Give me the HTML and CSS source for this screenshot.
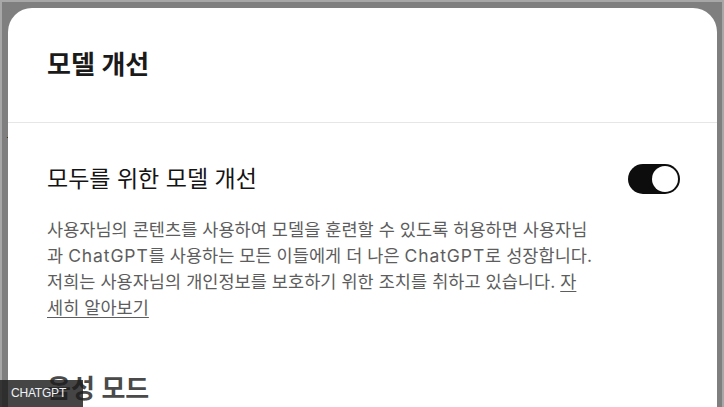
FILE: index.html
```html
<!DOCTYPE html>
<html lang="ko">
<head>
<meta charset="utf-8">
<title>모델 개선</title>
<link rel="stylesheet" href="styles.css">
</head>
<body>
<div class="backdrop">
  <span class="behind">ㅓ</span>
  <div class="modal">
    <header class="modal-header">
      <h1 class="modal-title">모델 개선</h1>
    </header>
    <div class="modal-body">
      <div class="setting-row">
        <span class="setting-label">모두를 위한 모델 개선</span>
        <span class="toggle" role="switch" aria-checked="true"><span class="knob"></span></span>
      </div>
      <p class="setting-desc">사용자님의 콘텐츠를 사용하여 모델을 훈련할 수 있도록 허용하면 사용자님<br>과 <span class="brand">ChatGPT</span>를 사용하는 모든 이들에게 더 나은 <span class="brand">ChatGPT</span>로 성장합니다.<br>저희는 사용자님의 개인정보를 보호하기 위한 조치를 취하고 있습니다. <a class="learn" href="#">자<br>세히 알아보기</a></p>
      <h2 class="section-title">음성 모드</h2>
    </div>
  </div>
</div>
<div class="source-tag">CHATGPT</div>
</body>
</html>
```
FILE: styles.css
```css
html, body {
  margin: 0;
  padding: 0;
}
body {
  width: 724px;
  height: 407px;
  overflow: hidden;
  background: #a7a7a7;
  font-family: Inter, "Noto Sans CJK KR", "Noto Sans", sans-serif;
  position: relative;
}
.backdrop {
  position: relative;
  margin: 2px 2px 0 2px;
  height: 405px;
  box-sizing: border-box;
  background: #7f7f7f;
  padding: 6px 5px 0 6px;
}
.behind {
  position: absolute;
  left: 1px;
  top: 126px;
  font-size: 14px;
  color: #1a1a1a;
  line-height: 20px;
}
.modal {
  position: relative;
  height: 100%;
  background: #ffffff;
  border-radius: 24px 24px 0 0;
  overflow: hidden;
}
.modal-header {
  height: 115px;
  box-sizing: border-box;
  display: flex;
  align-items: center;
  padding: 0 40px 0 39px;
  border-bottom: 1px solid #e6e6e6;
}
.modal-title {
  margin: 0;
  font-size: 26px;
  font-weight: 600;
  color: #1a1a1a;
  line-height: 34px;
}
.modal-body {
  padding: 41px 37px 0 39px;
}
.setting-row {
  display: flex;
  align-items: center;
  justify-content: space-between;
  height: 30px;
}
.setting-label {
  font-size: 23px;
  color: #141414;
  line-height: 30px;
  font-weight: 400;
}
.toggle {
  width: 52px;
  height: 30px;
  border-radius: 15px;
  background: #0d0d0d;
  display: flex;
  align-items: center;
  justify-content: flex-end;
  padding: 0 2px;
  box-sizing: border-box;
}
.knob {
  width: 26px;
  height: 26px;
  border-radius: 50%;
  background: #ffffff;
}
.setting-desc {
  margin: 23px 0 0 0;
  font-size: 17.5px;
  letter-spacing: 0.05px;
  line-height: 26px;
  color: #5d5d5d;
}
.brand {
  letter-spacing: 0.9px;
}
.learn {
  color: #5d5d5d;
  text-decoration: underline;
  text-underline-offset: 3px;
}
.section-title {
  margin: 51px 0 0 0;
  font-size: 26px;
  font-weight: 600;
  color: #4a4a4a;
  line-height: 34px;
}
.source-tag {
  position: absolute;
  left: 0;
  top: 380px;
  width: 83px;
  height: 27px;
  background: rgba(28, 28, 28, 0.82);
  color: #eef2f7;
  font-family: "Liberation Sans", Arial, sans-serif;
  font-size: 12px;
  line-height: 27px;
  padding-left: 11px;
  box-sizing: border-box;
  letter-spacing: -0.2px;
}
```
